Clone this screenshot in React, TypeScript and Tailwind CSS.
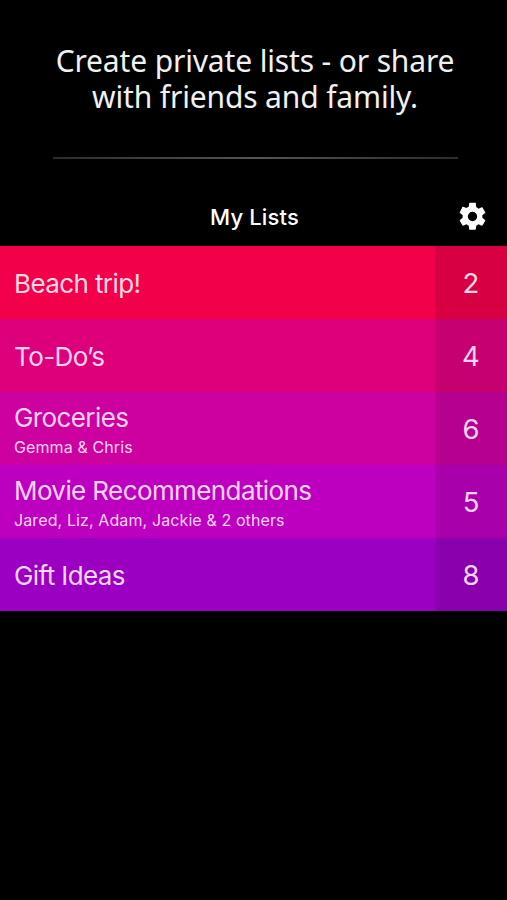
const rows = [
  { title: "Beach trip!", people: "", count: 2, color: "bg-[#f20049]", side: "bg-[#d70042]", ink: "text-[#ffd9e4]" },
  { title: "To-Do’s", people: "", count: 4, color: "bg-[#de007b]", side: "bg-[#c6006e]", ink: "text-[#ffd5f0]" },
  { title: "Groceries", people: "Gemma & Chris", count: 6, color: "bg-[#cd00a0]", side: "bg-[#b6008f]", ink: "text-[#ffd5f7]" },
  { title: "Movie Recommendations", people: "Jared, Liz, Adam, Jackie & 2 others", count: 5, color: "bg-[#bd00bf]", side: "bg-[#a800aa]", ink: "text-[#fdd5ff]" },
  { title: "Gift Ideas", people: "", count: 8, color: "bg-[#9b00c2]", side: "bg-[#8a00ad]", ink: "text-[#f8d8ff]" },
];

export default function App() {
  return (
    <div className="h-[900px] w-[507px] overflow-hidden bg-black font-['Inter',sans-serif] text-white">
      <header className="flex h-[188px] flex-col items-center pt-[43px] pl-[3px]">
        <h1 className="text-center font-['Noto_Sans','Open_Sans',sans-serif] text-[30px] leading-[35.5px] tracking-[-0.15px] text-[#f0f0f0]">
          Create private lists - or share
          <br />
          with friends and family.
        </h1>
        <div className="mt-[43px] h-[2px] w-[405px] bg-linear-to-r from-[#2c2c2c] via-[#555] to-[#2c2c2c]" />
      </header>
      <nav className="grid h-[58px] grid-cols-[72px_1fr_70px] items-center">
        <h2 className="col-start-2 text-center text-[22px] font-medium tracking-[0.15px]">My Lists</h2>
        <svg viewBox="0 0 24 24" className="mb-px ml-px size-[33px] justify-self-center fill-white">
          <path d="M19.14 12.94c.04-.3.06-.61.06-.94s-.02-.64-.07-.94l2.03-1.58c.18-.14.23-.41.12-.61l-1.92-3.32c-.12-.22-.37-.29-.59-.22l-2.39.96c-.5-.38-1.03-.7-1.62-.94l-.36-2.54A.484.484 0 0 0 13.92 2h-3.84c-.24 0-.43.17-.47.41l-.36 2.54c-.59.24-1.13.57-1.62.94l-2.39-.96c-.22-.08-.47 0-.59.22L2.74 8.87c-.12.21-.08.47.12.61l2.03 1.58c-.05.3-.09.63-.09.94s.02.64.07.94l-2.03 1.58c-.18.14-.23.41-.12.61l1.92 3.32c.12.22.37.29.59.22l2.39-.96c.5.38 1.03.7 1.62.94l.36 2.54c.05.24.24.41.48.41h3.84c.24 0 .44-.17.47-.41l.36-2.54c.59-.24 1.13-.56 1.62-.94l2.39.96c.22.08.47 0 .59-.22l1.92-3.32c.12-.22.07-.47-.12-.61zM12 15.4A3.4 3.4 0 1 1 12 8.6a3.4 3.4 0 0 1 0 6.8z" />
        </svg>
      </nav>
      <main>
        {rows.map((r) => (
          <section key={r.title} className={`flex h-[73px] ${r.color} ${r.ink}`}>
            <div className="flex flex-1 flex-col justify-center pt-[2px] pl-[14px]">
              <div className="text-[26px] leading-8 tracking-[-0.6px]">{r.title}</div>
              {r.people && <div className="mt-px -mb-px text-[16px] leading-6 tracking-[0.11px]">{r.people}</div>}
            </div>
            <div className={`flex w-[72px] items-center justify-center pt-[3px] text-[27.5px] ${r.side}`}>{r.count}</div>
          </section>
        ))}
      </main>
    </div>
  );
}
